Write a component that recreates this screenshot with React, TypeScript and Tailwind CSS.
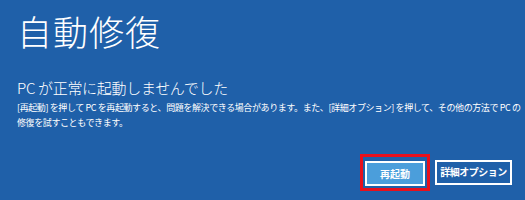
import React from "react";

export default function App() {
  return (
    <div
      className="w-[525px] h-[200px] bg-[#1f60a9] text-white overflow-hidden flex flex-col pl-[17px] pr-[8px]"
      style={{ fontFamily: '"Noto Sans CJK JP", "Noto Sans", sans-serif' }}
    >
      <h1 className="mt-[9px] text-[35px] leading-[44px] font-light tracking-[1px]">自動修復</h1>
      <h2 className="mt-[25px] text-[15px] leading-[20px] font-light tracking-[-0.3px]">PC が正常に起動しませんでした</h2>
      <p className="mt-[2px] text-[9px] leading-[15px] tracking-[-0.4px] whitespace-nowrap">
        [再起動] を押して PC を再起動すると、問題を解決できる場合があります。また、[詳細オプション] を押して、その他の方法で PC の
        <br />
        修復を試すこともできます。
      </p>
      <div className="mt-auto mb-[9px] mr-[5px] flex justify-end items-center gap-[5px]">
        <div className="border-[3px] border-[#e8101c] p-[2px]">
          <button className="w-[60px] h-[25px] bg-[#4b9edb] border-2 border-white text-[10px] font-bold leading-none whitespace-nowrap">
            再起動
          </button>
        </div>
        <button className="w-[77px] h-[25px] border-2 border-white text-[10px] font-bold leading-none whitespace-nowrap tracking-[-0.5px]">
          詳細オプション
        </button>
      </div>
    </div>
  );
}
